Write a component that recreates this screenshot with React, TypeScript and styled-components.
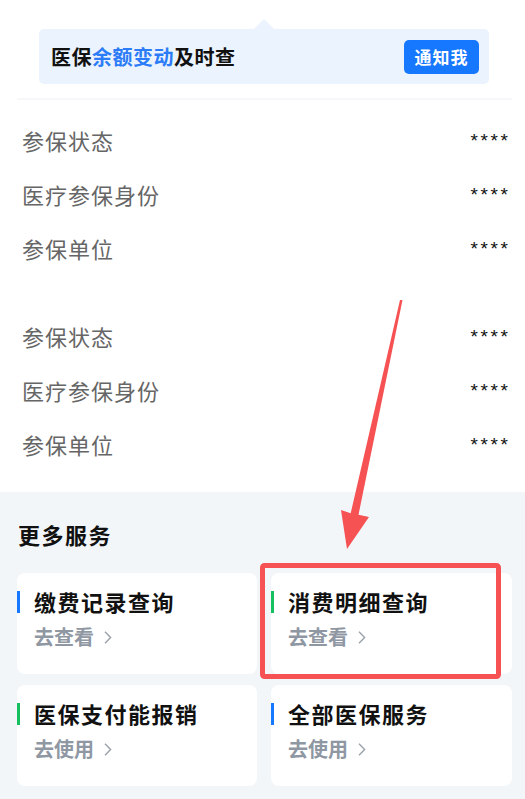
import styled, { createGlobalStyle } from 'styled-components';

const GlobalStyle = createGlobalStyle`
  html, body {
    margin: 0;
    padding: 0;
    background: #ffffff;
  }

  body {
    font-family: 'Noto Sans CJK SC', 'Noto Sans', sans-serif;
  }
`;

const Page = styled.div`
  position: relative;
  width: 525px;
  min-height: 799px;
  background: #ffffff;
`;

const Top = styled.div`
  padding: 29px 13px 0 17px;
`;

const Banner = styled.div`
  position: relative;
  display: flex;
  align-items: center;
  justify-content: space-between;
  height: 55px;
  margin: 0 23px 0 22px;
  padding: 0 10px 0 12px;
  background: #ebf3fe;
  border-radius: 5px;

  &::before {
    content: '';
    position: absolute;
    top: -10px;
    left: 215px;
    border-left: 10px solid transparent;
    border-right: 10px solid transparent;
    border-bottom: 10px solid #ebf3fe;
  }
`;

const BannerText = styled.div`
  font-size: 20px;
  font-weight: 700;
  letter-spacing: 0.5px;
  color: #111111;
`;

const Highlight = styled.span`
  color: #2b7cf6;
`;

const NotifyButton = styled.button`
  width: 75px;
  height: 34px;
  border: none;
  border-radius: 5px;
  background: #1677ff;
  color: #ffffff;
  font-family: inherit;
  font-size: 17px;
  font-weight: 700;
  letter-spacing: 1px;
  padding: 0;
`;

const Divider = styled.div`
  height: 2px;
  margin-top: 14px;
  background: #f6f7f9;
`;

const InfoList = styled.div`
  display: flex;
  flex-direction: column;
  gap: 34px;
  padding: 13px 4px 21px 5px;
`;

const InfoGroup = styled.div`
  display: flex;
  flex-direction: column;
`;

const InfoRow = styled.div`
  display: flex;
  align-items: center;
  justify-content: space-between;
  height: 54px;
`;

const Label = styled.span`
  font-size: 22px;
  letter-spacing: 1px;
  color: #666666;
`;

const Masked = styled.span`
  font-family: 'Liberation Sans', Arial, sans-serif;
  font-size: 19px;
  letter-spacing: 2.6px;
  margin-right: -2.6px;
  color: #111111;
  transform: translateY(1px);
`;

const Services = styled.div`
  min-height: 309px;
  padding: 26px 13px 15px 17px;
  background: #f3f6f9;
  box-sizing: border-box;
`;

const SectionTitle = styled.h2`
  margin: 0 0 23px 1px;
  font-size: 22px;
  line-height: 32px;
  font-weight: 700;
  letter-spacing: 1.5px;
  color: #111111;
`;

const Grid = styled.div`
  display: grid;
  grid-template-columns: 240px 241px;
  column-gap: 14px;
  row-gap: 11px;
`;

const Card = styled.div`
  height: 101px;
  background: #ffffff;
  border-radius: 8px;
  padding-top: 12px;
  box-sizing: border-box;
`;

const CardTitle = styled.div<{ $accent: string }>`
  position: relative;
  padding-left: 17px;
  font-size: 22px;
  line-height: 32px;
  font-weight: 700;
  letter-spacing: 1.5px;
  color: #111111;

  &::before {
    content: '';
    position: absolute;
    left: 0;
    top: 6px;
    width: 3px;
    height: 22px;
    background: ${({ $accent }) => $accent};
  }
`;

const CardLink = styled.div`
  display: flex;
  align-items: center;
  gap: 10px;
  margin-top: 6px;
  padding-left: 17px;
  font-size: 20px;
  line-height: 28px;
  font-weight: 700;
  color: #8f97a3;

  svg {
    flex-shrink: 0;
  }
`;

const Overlay = styled.svg`
  position: absolute;
  top: 0;
  left: 0;
  pointer-events: none;
`;

const BLUE = '#1677ff';
const GREEN = '#16c060';

const groups = [
  [
    ['参保状态', '****'],
    ['医疗参保身份', '****'],
    ['参保单位', '****'],
  ],
  [
    ['参保状态', '****'],
    ['医疗参保身份', '****'],
    ['参保单位', '****'],
  ],
];

const services = [
  { title: '缴费记录查询', link: '去查看', accent: BLUE },
  { title: '消费明细查询', link: '去查看', accent: GREEN },
  { title: '医保支付能报销', link: '去使用', accent: GREEN },
  { title: '全部医保服务', link: '去使用', accent: BLUE },
];

const Chevron = () => (
  <svg width="8" height="13" viewBox="0 0 8 13">
    <path d="M1 0.8 L6.6 6.5 L1 12.2" fill="none" stroke="#9aa1ab" strokeWidth="1.4" />
  </svg>
);

const App = () => (
  <Page>
    <GlobalStyle />
    <Top>
      <Banner>
        <BannerText>
          医保<Highlight>余额变动</Highlight>及时查
        </BannerText>
        <NotifyButton>通知我</NotifyButton>
      </Banner>
      <Divider />
      <InfoList>
        {groups.map((rows, i) => (
          <InfoGroup key={i}>
            {rows.map(([label, value]) => (
              <InfoRow key={label}>
                <Label>{label}</Label>
                <Masked>{value}</Masked>
              </InfoRow>
            ))}
          </InfoGroup>
        ))}
      </InfoList>
    </Top>
    <Services>
      <SectionTitle>更多服务</SectionTitle>
      <Grid>
        {services.map((s) => (
          <Card key={s.title}>
            <CardTitle $accent={s.accent}>{s.title}</CardTitle>
            <CardLink>
              {s.link}
              <Chevron />
            </CardLink>
          </Card>
        ))}
      </Grid>
    </Services>
    {/* annotation: arrow + highlight box */}
    <Overlay width="525" height="799" viewBox="0 0 525 799">
      <polygon
        points="400,300 402.5,300 358.5,514.8 369,517 347,549 341,510 350.7,513.2"
        fill="#f65153"
      />
      <rect x="262.5" y="565.5" width="236" height="111" rx="2" fill="none" stroke="#f65153" strokeWidth="5" />
    </Overlay>
  </Page>
);

export default App;
